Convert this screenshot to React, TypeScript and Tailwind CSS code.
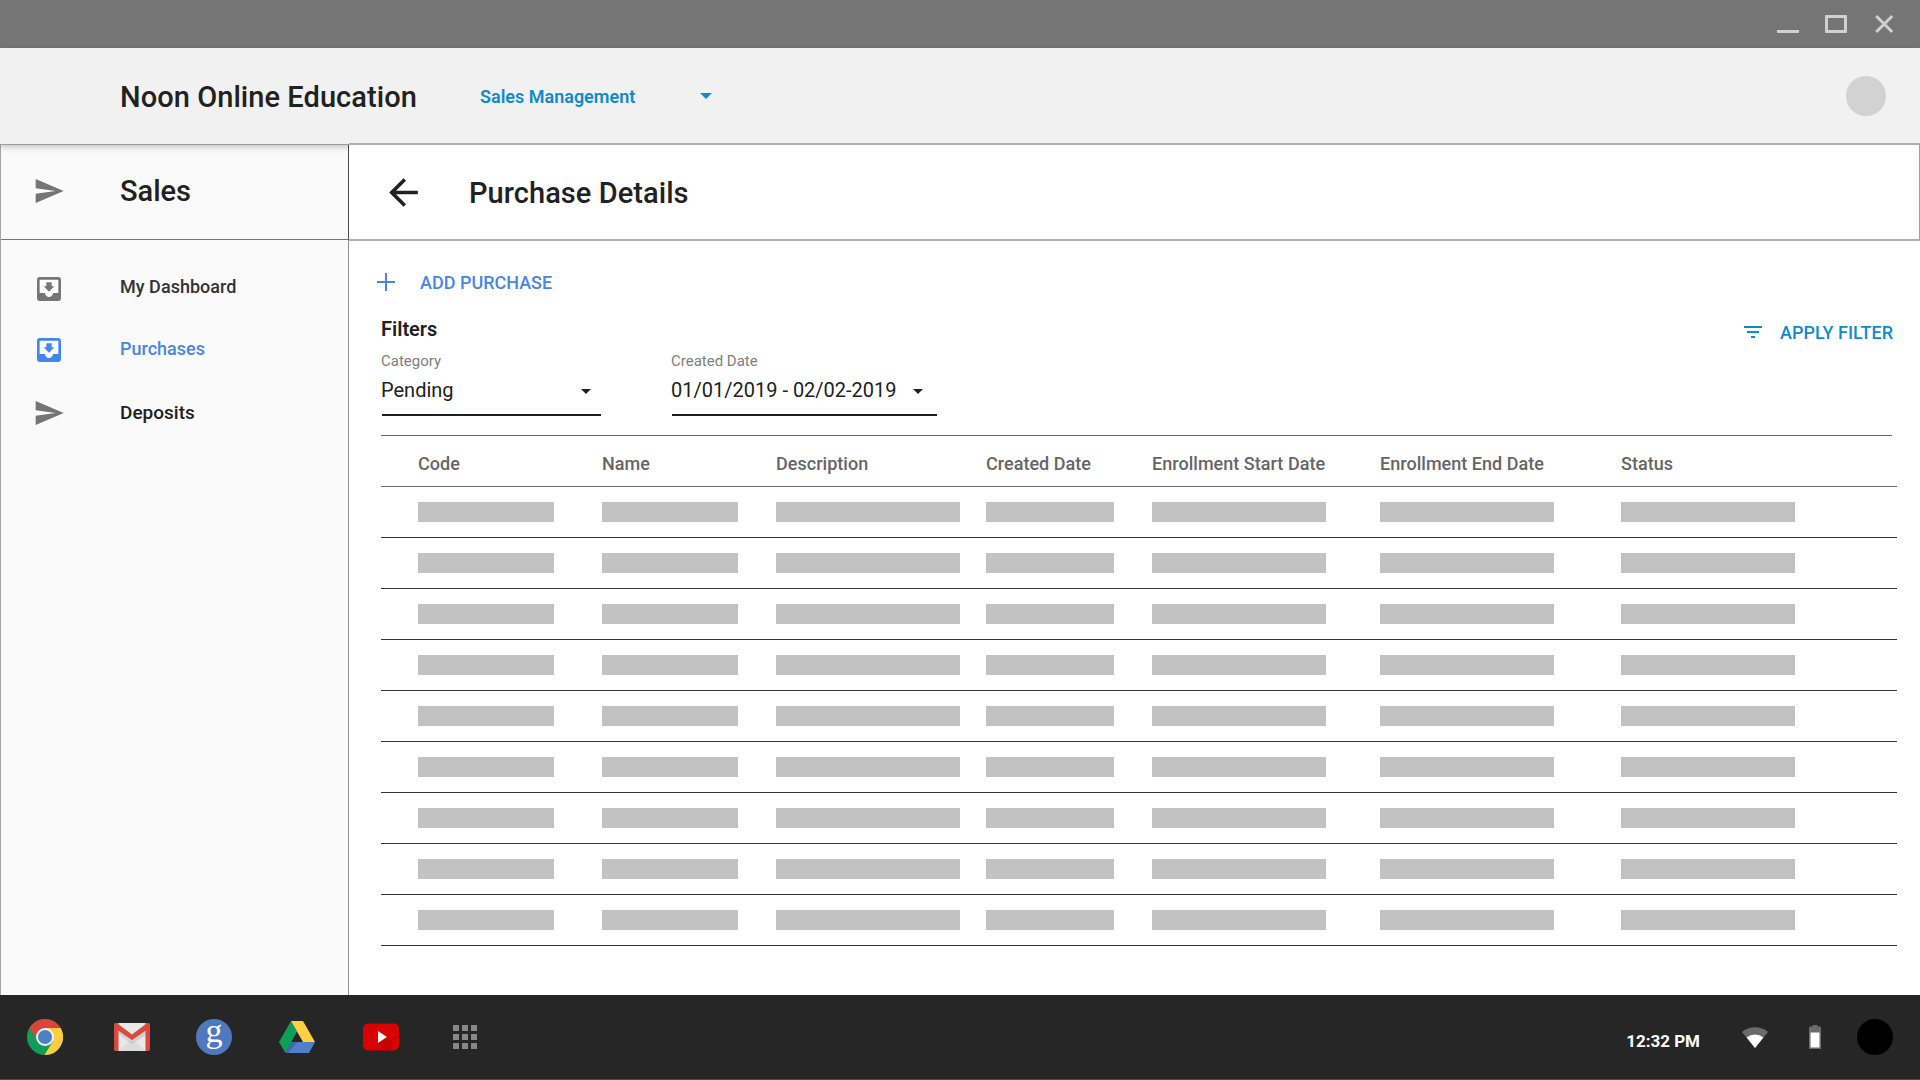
import React from "react";

const columns = [
  { label: "Code", cell: "w-[184px]", bar: "w-[136px]" },
  { label: "Name", cell: "w-[174px]", bar: "w-[136px]" },
  { label: "Description", cell: "w-[210px]", bar: "w-[184px]" },
  { label: "Created Date", cell: "w-[166px]", bar: "w-[128px]" },
  { label: "Enrollment Start Date", cell: "w-[228px]", bar: "w-[174px]" },
  { label: "Enrollment End Date", cell: "w-[241px]", bar: "w-[174px]" },
  { label: "Status", cell: "w-[276px]", bar: "w-[174px]" },
];

function SendIcon({ className = "" }: { className?: string }) {
  return (
    <svg viewBox="0 0 24 24" className={className + " size-8 fill-[#757575]"}>
      <path d="M2.01 21L23 12 2.01 3 2 10l15 2-15 2z" />
    </svg>
  );
}

function InboxIcon({ className }: { className: string }) {
  return (
    <svg viewBox="0 0 24 24" className={className}>
      <path d="M4 4h16v12H4z" fill="#fff" />
      <path d="M19 3H4.99c-1.11 0-1.98.9-1.98 2L3 19c0 1.1.88 2 1.99 2H19c1.1 0 2-.9 2-2V5c0-1.1-.9-2-2-2zm0 12h-4c0 1.66-1.35 3-3 3s-3-1.34-3-3H4.99V5H19v10zm-3-5h-2V7h-4v3H8l4 4 4-4z" />
    </svg>
  );
}

function Caret({ className }: { className: string }) {
  return (
    <svg viewBox="0 0 10 5" className={className}>
      <path d="M0 0h10L5 5z" />
    </svg>
  );
}

function TitleBar() {
  return (
    <div className="flex h-12 items-start justify-end bg-[#757575] pr-[26px]">
      <svg viewBox="0 0 118 24" className="mt-3 h-6 w-[118px]" fill="none" stroke="#d0d0d0" strokeWidth="3">
        <path d="M1 19.5h22" />
        <path d="M50.5 4.5h19v15h-19z" />
        <path d="M100.2 4l16 16M116.2 4l-16 16" />
      </svg>
    </div>
  );
}

function Header() {
  return (
    <header className="relative z-10 flex h-[97px] items-center border-b border-[#9e9e9e] bg-[#f1f1f1] pl-[120px] shadow-[0_2px_6px_rgba(0,0,0,0.22)]">
      <h1 className="w-[360px] pt-[2px] text-[29px] leading-none font-[480] tracking-[0.06px]">Noon Online Education</h1>
      <span className="w-[220px] pt-px text-[18px] leading-none font-semibold text-[#118bc9]">Sales Management</span>
      <Caret className="h-1.5 w-3 fill-[#118bc9]" />
      <div className="mr-[34px] ml-auto size-10 rounded-full bg-[#d2d2d2]" />
    </header>
  );
}

function Sidebar() {
  return (
    <aside className="w-[349px] border-r border-l border-r-[#8e8e8e] border-l-[#a6a6a6] bg-[#fafafa]">
      <div className="-mr-px flex h-[95px] items-center border-r border-b border-r-[#4a4a4a] border-b-[#757575] pl-8">
        <SendIcon className="mb-[3px]" />
        <span className="mb-px ml-[55px] text-[29px] leading-none font-[480]">Sales</span>
      </div>
      <nav className="pl-8 text-[18px] leading-6 font-medium">
        <a className="mt-[33px] flex h-8">
          <InboxIcon className="size-8 fill-[#757575]" />
          <span className="mt-[2px] ml-[55px] font-[470] tracking-[0.03px] text-[#333]">My Dashboard</span>
        </a>
        <a className="mt-[29px] flex h-8">
          <InboxIcon className="size-8 fill-[#4285f4]" />
          <span className="mt-[3px] ml-[55px] text-[#4a86e0]">Purchases</span>
        </a>
        <a className="mt-[31px] flex h-8">
          <SendIcon />
          <span className="mt-1 ml-[55px] text-[19px]">Deposits</span>
        </a>
      </nav>
    </aside>
  );
}

function Table() {
  return (
    <div className="mt-[19px] w-[1516px]">
      <div className="mr-[5px] h-px bg-[#6c6c6c]" />
      <div className="flex h-[51px] items-center border-b border-[#6c6c6c] pl-[37px] text-[18px] font-[470] tracking-[0.03px] text-[#666]">
        {columns.map((c) => (
          <div key={c.label} className={c.cell + " shrink-0 pt-1 whitespace-nowrap"}>{c.label}</div>
        ))}
      </div>
      {Array.from({ length: 9 }, (_, i) => (
        <div key={i} className="flex h-[51px] items-center border-b border-[#353535] pl-[37px]">
          {columns.map((c) => (
            <div key={c.label} className={c.cell + " shrink-0"}>
              <div className={c.bar + " h-5 bg-[#c2c2c2]"} />
            </div>
          ))}
        </div>
      ))}
    </div>
  );
}

function Main() {
  return (
    <main className="flex-1 bg-white">
      <div className="-mt-[2px] flex h-[98px] items-center border-y-2 border-r border-[#b0b0b0] border-r-[#a0a0a0] pl-[33px]">
        <svg viewBox="0 0 24 24" className="size-[43px] fill-[#212121]">
          <path d="M20 11H7.83l5.59-5.59L12 4l-8 8 8 8 1.41-1.41L7.83 13H20v-2z" />
        </svg>
        <h2 className="ml-[44px] pt-[2px] text-[29px] leading-none font-[480] tracking-[0.06px]">Purchase Details</h2>
      </div>
      <div className="pl-[32px]">
        <div className="mt-7 flex h-[26px] items-center text-[#4a86e0]">
          <svg viewBox="0 0 18 18" className="ml-[-4px] size-[18px]" fill="none" stroke="currentColor" strokeWidth="2">
            <path d="M9 0v18M0 9h18" />
          </svg>
          <span className="ml-[25px] text-[18px] font-medium">ADD PURCHASE</span>
        </div>
        <div className="flex h-[121px]">
          <div>
            <h3 className="mt-[22px] text-[20px] leading-6 font-semibold">Filters</h3>
            <div className="mt-[11px] flex">
              <div className="w-[290px]">
                <div className="text-[15px] leading-[18px] text-[#808080]">Category</div>
                <div className="mt-2 ml-px flex h-[38px] w-[219px] items-start border-b-2 border-[#212121] text-[20px] leading-6">
                  <span className="-ml-px w-[200px]">Pending</span>
                  <Caret className="mt-[11px] h-[5px] w-[10px] fill-[#212121]" />
                </div>
              </div>
              <div>
                <div className="text-[15px] leading-[18px] text-[#808080]">Created Date</div>
                <div className="mt-2 ml-px flex h-[38px] w-[265px] items-start border-b-2 border-[#212121] text-[20px] leading-6">
                  <span className="-ml-px w-[242px]">01/01/2019 - 02/02-2019</span>
                  <Caret className="mt-[11px] h-[5px] w-[10px] fill-[#212121]" />
                </div>
              </div>
            </div>
          </div>
          <div className="mt-[25px] mr-[27px] ml-auto flex h-6 items-center text-[#118bc9]">
            <svg viewBox="0 0 18 12" className="mr-[18px] h-3 w-[18px] fill-current">
              <path d="M0 0h18v2H0zM3 5h12v2H3zM7 10h4v2H7z" />
            </svg>
            <span className="text-[18px] font-medium">APPLY FILTER</span>
          </div>
        </div>
        <Table />
      </div>
    </main>
  );
}

function ChromeLogo() {
  return (
    <svg viewBox="0 0 36 36" className="size-9">
      <circle cx="18" cy="18" r="18" fill="#0f9d58" />
      <path d="M18 9h15.6A18 18 0 0 1 17.5 36L25.8 22.5z" fill="#ffcd40" />
      <path d="M33.6 9H18a9 9 0 0 0-7.8 13.5L2.6 9A18 18 0 0 1 33.6 9z" fill="#db4437" />
      <circle cx="18" cy="18" r="9" fill="#f1f1f1" />
      <circle cx="18" cy="18" r="7" fill="#4f7fc4" />
    </svg>
  );
}

function GmailLogo() {
  return (
    <svg viewBox="0 0 36 28" className="h-7 w-9">
      <rect width="36" height="28" rx="2" fill="#d54b3d" />
      <path d="M4.500 0h27v28h-27z" fill="#e8e8e8" />
      <path d="M4.500 28L18 16l13.500 12z" fill="#dcdcdc" />
      <path d="M4.500 6L18 19 31.500 6v6L18 21 4.500 11z" fill="#000" opacity=".1" />
      <path d="M0 2.500Q0 0 2.800 0L18 11.500 33.200 0Q36 0 36 2.500v2L18 17.200 0 4.500z" fill="#d94b3e" />
    </svg>
  );
}

function GoogleLogo() {
  return (
    <div className="flex size-9 items-center justify-center rounded-full bg-[#4f79bd] font-['Liberation_Serif',serif] text-[34px] leading-9 text-white">
      <span className="-translate-y-[6px]">g</span>
    </div>
  );
}

function DriveLogo() {
  return (
    <svg viewBox="0 0 36 32" className="h-8 w-9">
      <path d="M12 0l6 10.500L6.500 32 0 21z" fill="#109d58" />
      <path d="M12 0h12l12 21H24z" fill="#ffcf44" />
      <path d="M12.500 21H36l-6 11H6.500z" fill="#4f7fc6" />
      <path d="M12.500 21h6L9 32H6.500z" fill="#3f69ad" />
    </svg>
  );
}

function YoutubeLogo() {
  return (
    <svg viewBox="0 0 36 28" className="h-7 w-9">
      <rect y="0.500" width="36" height="27" rx="5" fill="#d80000" />
      <path d="M15 20l8.500-6 8 8-5 5.500h-4z" fill="#b80000" opacity=".6" />
      <path d="M15 8l9 6-9 6z" fill="#f5f5f5" />
    </svg>
  );
}

function Taskbar() {
  return (
    <footer className="flex h-[85px] items-center border-b border-[#4a4a4a] bg-[#262626] pl-[27px]">
      <ChromeLogo />
      <div className="ml-[51px]"><GmailLogo /></div>
      <div className="ml-[46px]"><GoogleLogo /></div>
      <div className="ml-[47px]"><DriveLogo /></div>
      <div className="ml-12"><YoutubeLogo /></div>
      <div className="ml-[54px] grid grid-cols-3 gap-[3px]">
        {Array.from({ length: 9 }, (_, i) => (
          <div key={i} className="size-1.5 bg-[#888]" />
        ))}
      </div>
      <div className="mr-[27px] ml-auto flex items-center">
        <span className="mt-[9px] mr-[42px] text-[17px] leading-none font-bold text-white">12:32 PM</span>
        <svg viewBox="0 0 26 21" className="mr-[41px] h-[21px] w-[26px]">
          <path d="M13 21L0 5a20.500 20.500 0 0 1 26 0z" fill="#6b6b6b" />
          <path d="M13 21L4.600 10.500a13.500 13.500 0 0 1 16.800 0z" fill="#fff" />
        </svg>
        <svg viewBox="0 0 12 24" className="mr-9 h-6 w-3">
          <path d="M3.500 0h5v1.500H11l1 1V24H0V2.500l1-1h2.500z" fill="#6b6b6b" />
          <path d="M1.500 7.500h9v15h-9z" fill="#fff" />
        </svg>
        <div className="size-9 rounded-full bg-black" />
      </div>
    </footer>
  );
}

export default function App() {
  return (
    <div className="flex h-[1080px] w-[1920px] flex-col overflow-hidden bg-white font-[Roboto,sans-serif] text-[#212121]">
      <TitleBar />
      <Header />
      <div className="relative flex flex-1">
        <Sidebar />
        <div className="relative z-20 flex flex-1">
          <Main />
        </div>
      </div>
      <Taskbar />
    </div>
  );
}
